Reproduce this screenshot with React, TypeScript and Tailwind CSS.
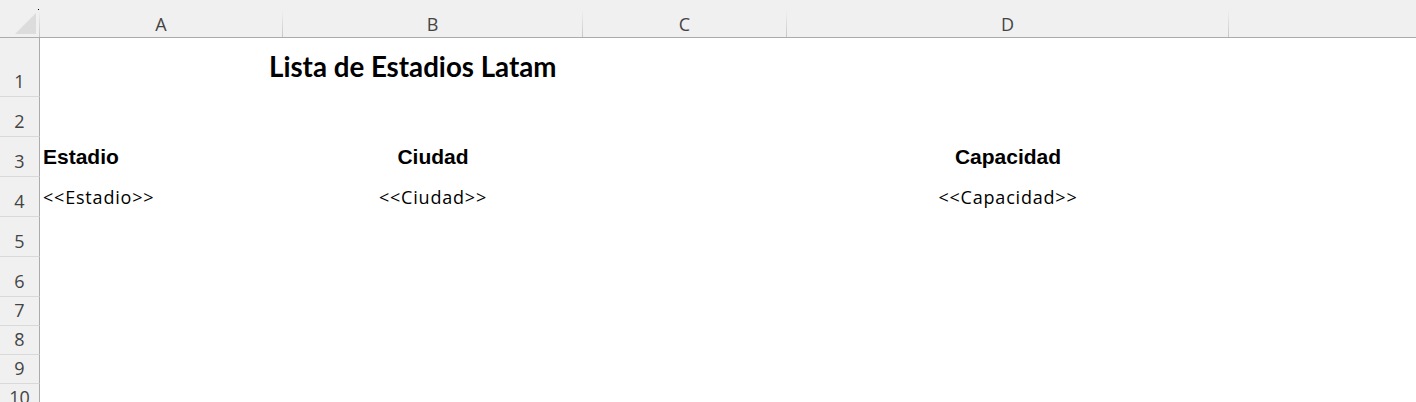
import React from 'react'

const cols = 'grid grid-cols-[40px_243px_300px_204px_442px_1fr]'

function ColHead({ label }: { label: string }) {
  return (
    <div className="flex">
      <div className="flex-1 flex items-end justify-center pb-[4px] text-[18px] leading-none text-[#444]">
        {label}
      </div>
      <div className="w-px self-end h-[27px] bg-linear-to-b from-[#f0f0f0] to-[#c8c8c8]"></div>
    </div>
  )
}

function RowHead({ n }: { n: number }) {
  return (
    <div className="flex items-end justify-center pb-[6px] bg-[#f0f0f0] border-r border-r-[#ababab] border-b border-b-[#d9d9d9] font-['Open_Sans',sans-serif] font-normal tracking-normal text-[18px] leading-none text-[#444]">
      {n}
    </div>
  )
}

export default function App() {
  return (
    <div className="w-[1416px] h-[402px] overflow-hidden bg-white font-['Open_Sans',sans-serif]">
      {/* column headers */}
      <div className={`${cols} h-[38px] bg-[#f0f0f0] border-b border-[#ababab]`}>
        <div className="flex">
          <svg width="39" height="37" viewBox="0 0 39 37" className="shrink-0">
            <polygon points="36,13 36,34 15,34" fill="#dcdcdc" />
            <rect x="38" y="9" width="1" height="1" fill="#000" />
          </svg>
          <div className="w-px self-end h-[27px] bg-linear-to-b from-[#f0f0f0] to-[#c8c8c8]"></div>
        </div>
        <ColHead label="A" />
        <ColHead label="B" />
        <ColHead label="C" />
        <ColHead label="D" />
        <div></div>
      </div>

      {/* row 1 */}
      <div className={`${cols} h-[59px]`}>
        <RowHead n={1} />
        <div className="col-span-5 flex items-end pl-[229px] pb-[16px] whitespace-nowrap font-['Lato',sans-serif] font-bold text-[27.7px] leading-none text-black">
          Lista de Estadios Latam
        </div>
      </div>

      {/* row 2 */}
      <div className={`${cols} h-[40px]`}>
        <RowHead n={2} />
      </div>

      {/* row 3 */}
      <div className={`${cols} h-[40px] font-['Liberation_Sans',Arial,sans-serif] font-bold text-[21px] leading-none text-black`}>
        <RowHead n={3} />
        <div className="flex items-end pl-[3px] pb-[10px]">Estadio</div>
        <div className="flex items-end justify-center pb-[10px]">Ciudad</div>
        <div></div>
        <div className="flex items-end justify-center pb-[10px]">Capacidad</div>
      </div>

      {/* row 4 */}
      <div className={`${cols} h-[40px] text-[18px] tracking-[0.8px] leading-none text-black`}>
        <RowHead n={4} />
        <div className="flex items-end pl-[3px] pb-[11px] whitespace-nowrap">&lt;&lt;Estadio&gt;&gt;</div>
        <div className="flex items-end justify-center pb-[11px] whitespace-nowrap">&lt;&lt;Ciudad&gt;&gt;</div>
        <div></div>
        <div className="flex items-end justify-center pb-[11px] whitespace-nowrap">&lt;&lt;Capacidad&gt;&gt;</div>
      </div>

      <div className={`${cols} h-[40px]`}>
        <RowHead n={5} />
      </div>
      <div className={`${cols} h-[40px]`}>
        <RowHead n={6} />
      </div>
      <div className={`${cols} h-[29px]`}>
        <RowHead n={7} />
      </div>
      <div className={`${cols} h-[29px]`}>
        <RowHead n={8} />
      </div>
      <div className={`${cols} h-[29px]`}>
        <RowHead n={9} />
      </div>
      <div className={`${cols} h-[29px]`}>
        <RowHead n={10} />
      </div>
    </div>
  )
}
